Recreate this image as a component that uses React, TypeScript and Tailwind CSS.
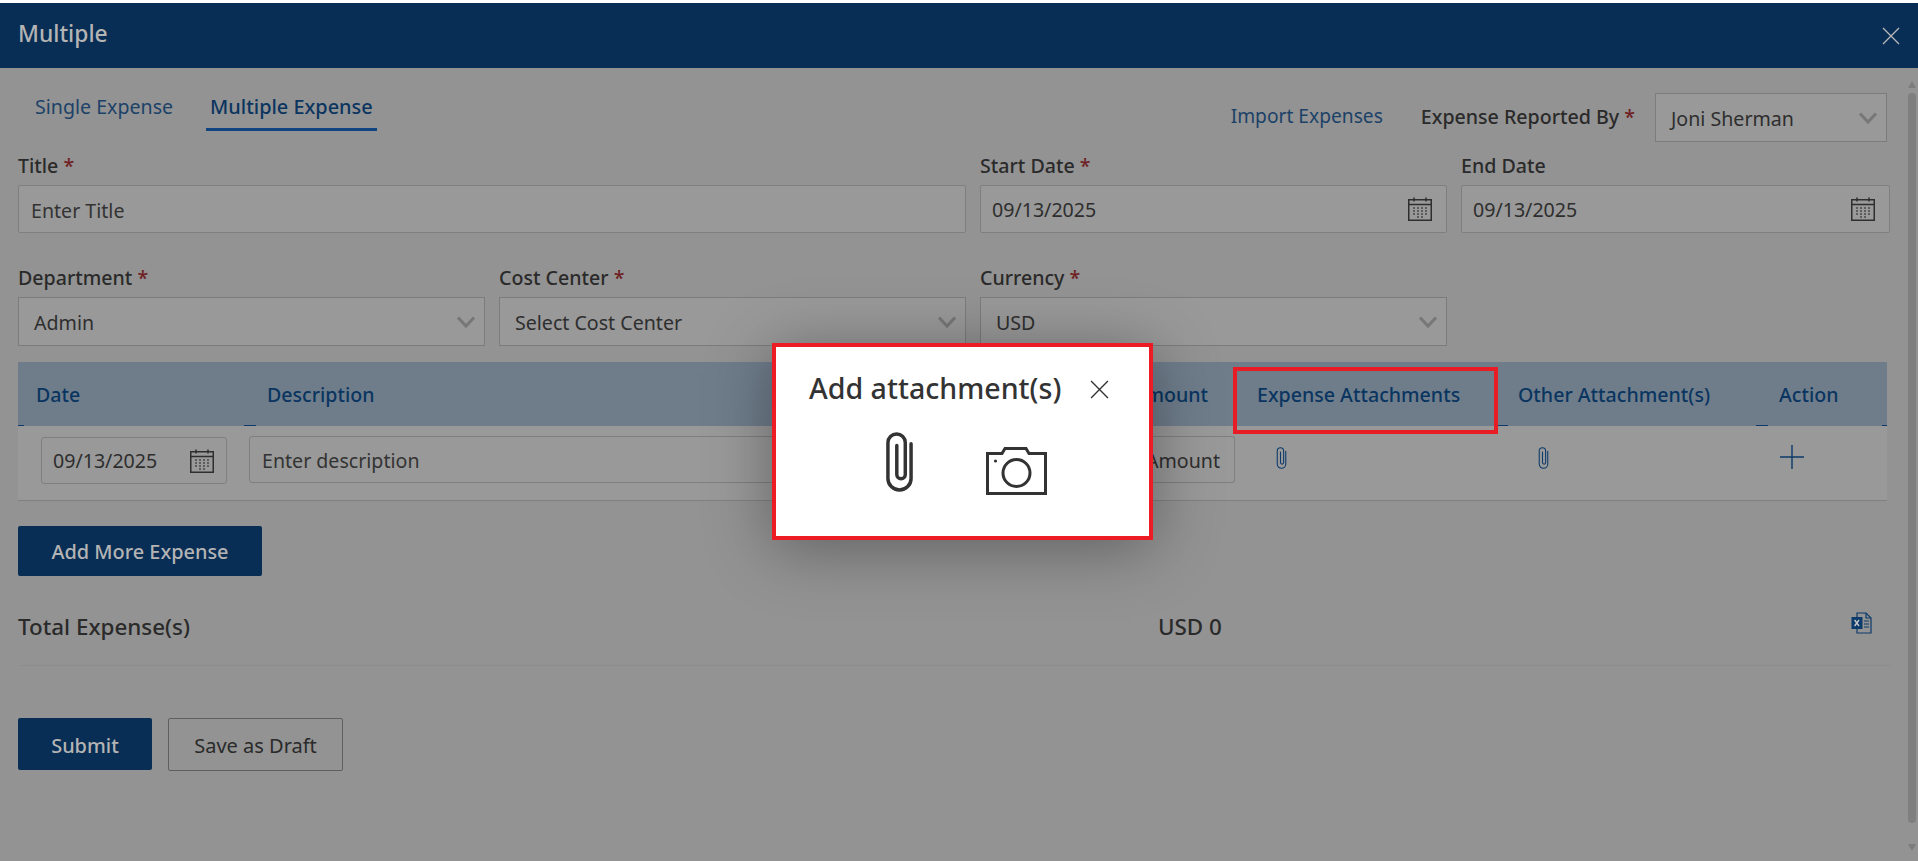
import React from 'react';

const Star = () => <span className="text-[#6f1f24]"> *</span>;

const Cross = ({ className = '' }: { className?: string }) => (
  <svg viewBox="0 0 18 18" className={className} fill="none" stroke="currentColor" strokeWidth="1.3">
    <path d="M1 1l16 16M17 1L1 17" />
  </svg>
);

const Calendar = ({ className = '' }: { className?: string }) => (
  <svg viewBox="0 0 24 24" className={className} fill="none" stroke="#2e2e2e">
    <rect x="0.75" y="2.75" width="22.5" height="20.5" strokeWidth="1.5" />
    <path d="M0.75 7.5h22.5" strokeWidth="1.5" />
    <path d="M6 0.5v4M18 0.5v4" strokeWidth="1.5" />
    <path
      d="M5 11h2M9 11h2M13 11h2M17 11h2M5 14h2M9 14h2M13 14h2M17 14h2M5 17h2M9 17h2M13 17h2M17 17h2M9 20h2M13 20h2"
      strokeWidth="1.5"
      stroke="#4a4a4a"
    />
  </svg>
);

const Chevron = () => (
  <svg viewBox="0 0 18 12" className="w-[18px] h-[12px]" fill="none" stroke="#777777" strokeWidth="3">
    <path d="M1 1.5l8 8.5 8-8.5" />
  </svg>
);

const Clip = ({ className = '', stroke = '#0b3a6b', width = 1.5 }: { className?: string; stroke?: string; width?: number }) => (
  <svg viewBox="0 0 14 31" className={className} fill="none" stroke={stroke} strokeWidth={width} strokeLinecap="round">
    <path d="M13 6v18a6 6 0 0 1-12 0V5.5a4.5 4.5 0 0 1 9 0V22a2.2 2.2 0 0 1-4.4 0V7" />
  </svg>
);

const Camera = () => (
  <svg viewBox="0 0 61 48" className="w-[61px] h-[48px]" fill="none" stroke="#333" strokeWidth="3">
    <path d="M1.5 6.5h14.5l3-5h21l3 5h16.5v40h-58z" strokeLinejoin="miter" />
    <circle cx="30.5" cy="26" r="13.5" />
    <circle cx="9.5" cy="14" r="1.6" fill="#333" stroke="none" />
  </svg>
);

const Excel = () => (
  <svg viewBox="0 0 22 22" className="w-[22px] h-[22px]" fill="none" stroke="#0b3a6b" strokeWidth="1.2">
    <path d="M6 5V1h9l5 5v15H6v-4" />
    <path d="M15 1v5h5" />
    <path d="M13 9h5M13 12h5M13 15h5" />
    <rect x="0.5" y="5" width="11" height="12" fill="#0b3a6b" stroke="none" />
    <path d="M3.6 8l4.4 6M8 8l-4.4 6" stroke="#c8c8c8" strokeWidth="1.4" />
  </svg>
);

const Field = ({ label, required, children, className = '' }: { label: string; required?: boolean; children: React.ReactNode; className?: string }) => (
  <div className={className}>
    <label className="block h-[26px] leading-[28px] mb-[7px] text-[19.6px] font-medium text-[#2a2a2a]">
      {label}
      {required && <Star />}
    </label>
    {children}
  </div>
);

const TextInput = ({ placeholder, value }: { placeholder?: string; value?: string }) => (
  <input
    readOnly
    placeholder={placeholder}
    value={value}
    className="w-full h-[48px] px-[12px] pt-[2px] bg-[#999999] border border-[#7f7f7f] rounded-[2px] text-[19.6px] text-[#2e2e2e] placeholder:text-[#333333] outline-none"
  />
);

const DateInput = ({ value }: { value: string }) => (
  <div className="h-[48px] pl-[11px] pr-[14px] bg-[#999999] border border-[#7f7f7f] rounded-[2px] flex items-center justify-between text-[19.6px] text-[#2e2e2e]">
    <span className="pt-[1px]">{value}</span>
    <Calendar className="w-[24px] h-[24px]" />
  </div>
);

const Select = ({ value, className = '' }: { value: string; className?: string }) => (
  <div className={`h-[49px] pl-[15px] pr-[9px] bg-[#999999] border border-[#7c7c7c] flex items-center justify-between text-[19.6px] text-[#2e2e2e] ${className}`}>
    <span className="pt-[3px]">{value}</span>
    <Chevron />
  </div>
);

const Dash = ({ className }: { className: string }) => <span className={`absolute bottom-0 h-px bg-[#0b3a6b] ${className}`} />;

export default function App() {
  return (
    <div className="relative h-[861px] overflow-hidden bg-[#939393] font-['Noto_Sans','Open_Sans',sans-serif]">
      <div className="h-[3px] bg-white" />
      <header className="h-[65px] bg-[#082e55] flex items-center justify-between pl-[18px] pr-[18px]">
        <h1 className="text-[22.8px] font-medium text-[#b4b4b4] -mt-[3px]">Multiple</h1>
        <Cross className="w-[18px] h-[18px] text-[#b9b9b9]" />
      </header>

      <main className="pl-[18px] pr-[27px]">
        <div className="h-[84px] flex justify-between">
          <div className="flex items-start pt-[24px] pl-[17px]">
            <span className="h-[36px] text-[19.6px] text-[#1c4268]">Single Expense</span>
            <span className="ml-[33px] -mr-[4px] px-[4px] h-[39px] border-b-[3px] border-[#0f4480] text-[19.9px] font-medium text-[#0b3560]">
              Multiple Expense
            </span>
          </div>
          <div className="flex items-start pt-[25px] pr-[4px]">
            <span className="mt-[9px] text-[19.2px] text-[#1c4268]">Import Expenses</span>
            <span className="mt-[9px] ml-[38px] text-[19.6px] font-medium text-[#2a2a2a]">
              Expense Reported By
              <Star />
            </span>
            <Select value="Joni Sherman" className="w-[232px] ml-[20px]" />
          </div>
        </div>

        <div className="grid grid-cols-[467px_467px_467px_429px] gap-x-[14px]">
          <Field label="Title" required className="col-span-2">
            <TextInput placeholder="Enter Title" />
          </Field>
          <Field label="Start Date" required>
            <DateInput value="09/13/2025" />
          </Field>
          <Field label="End Date">
            <DateInput value="09/13/2025" />
          </Field>

          <Field label="Department" required className="mt-[31px]">
            <Select value="Admin" />
          </Field>
          <Field label="Cost Center" required className="mt-[31px]">
            <Select value="Select Cost Center" />
          </Field>
          <Field label="Currency" required className="mt-[31px]">
            <Select value="USD" />
          </Field>
        </div>

        <div className="mt-[16px] mr-[4px]">
          <div className="relative h-[64px] pt-[1px] bg-[#6f7d8b] grid grid-cols-[231px_826px_170px_262px_255px_125px] items-center text-[19.6px] font-medium text-[#0a3560]">
            <span className="pl-[18px]">Date</span>
            <span className="pl-[18px]">Description</span>
            <span className="text-right pr-[37px]">Amount</span>
            <span className="pl-[12px]">Expense Attachments</span>
            <span className="pl-[11px]">Other Attachment(s)</span>
            <span className="pl-[17px]">Action</span>
            <Dash className="left-0 w-[6px]" />
            <Dash className="left-[226px] w-[12px]" />
            <Dash className="left-[1478px] w-[12px]" />
            <Dash className="left-[1738px] w-[12px]" />
            <Dash className="right-0 w-[5px]" />
          </div>
          <div className="h-[75px] bg-[#999999] border-b border-[#808080] grid grid-cols-[231px_826px_170px_262px_255px_125px] text-[19.6px] text-[#2e2e2e]">
            <div className="pl-[23px] pr-[22px] pt-[11px]">
              <div className="h-[47px] pl-[11px] pr-[12px] border border-[#7f7f7f] rounded-[3px] flex items-center justify-between">
                <span>09/13/2025</span>
                <Calendar className="w-[24px] h-[24px]" />
              </div>
            </div>
            <div className="pt-[10px]">
              <input
                readOnly
                placeholder="Enter description"
                className="w-full h-[47px] px-[12px] pt-[2px] bg-transparent border border-[#7f7f7f] rounded-l-[3px] placeholder:text-[#333333] outline-none"
              />
            </div>
            <div className="pt-[10px] pr-[10px]">
              <div className="h-[47px] pr-[14px] pt-[2px] border border-[#7f7f7f] border-l-0 rounded-r-[3px] flex items-center justify-end">Amount</div>
            </div>
            <div className="pl-[31px] pt-[21px]">
              <Clip className="w-[11px] h-[22px]" />
            </div>
            <div className="pl-[31px] pt-[21px]">
              <Clip className="w-[11px] h-[22px]" />
            </div>
            <div className="pl-[18px] pt-[19px]">
              <svg viewBox="0 0 24 24" className="w-[24px] h-[24px]" fill="none" stroke="#0b3a6b" strokeWidth="1.4">
                <path d="M12 0v24M0 12h24" />
              </svg>
            </div>
          </div>
        </div>

        <button className="block mt-[25px] w-[244px] h-[50px] pt-[2px] bg-[#082e55] rounded-[2px] text-[19.9px] font-medium text-[#b4b4b4]">
          Add More Expense
        </button>

        <div className="mt-[36px] h-[30px] flex items-center">
          <span className="w-[1140px] text-[22.4px] font-medium text-[#2a2a2a]">Total Expense(s)</span>
          <span className="text-[22.4px] font-medium text-[#2a2a2a]">USD 0</span>
          <span className="ml-auto mr-[18px] -mt-[8px]">
            <Excel />
          </span>
        </div>
        <div className="mt-[23px] h-px bg-[#8d8d8d]" />

        <div className="mt-[52px] flex gap-[16px]">
          <button className="w-[134px] h-[52px] pt-[3px] bg-[#082e55] rounded-[2px] text-[19.9px] font-medium text-[#b4b4b4]">Submit</button>
          <button className="w-[175px] h-[53px] pt-[2px] border border-[#5f5f5f] rounded-[2px] text-[20px] text-[#2a2a2a]">Save as Draft</button>
        </div>
      </main>

      {/* fake scrollbar */}
      <div className="absolute right-[2px] top-[81px] w-[8px] h-[770px] flex flex-col items-center">
        <span className="w-0 h-0 border-x-[4px] border-x-transparent border-b-[7px] border-b-[#7d7d7d]" />
        <span className="mt-[5px] w-[8px] h-[730px] rounded-full bg-[#7f7f7f]" />
        <span className="mt-auto w-0 h-0 border-x-[4px] border-x-transparent border-t-[7px] border-t-[#7d7d7d]" />
      </div>

      {/* red callout on the column header */}
      <div className="absolute left-[1233px] top-[367px] w-[265px] h-[67px] border-[4px] border-[#e81c24]" />

      <div className="absolute left-[772px] top-[343px] w-[381px] h-[197px] bg-white border-[4px] border-[#ed1c24] shadow-[0_8px_60px_rgba(0,0,0,0.35)]">
        <div className="flex items-center pl-[33px] pt-[21px]">
          <h2 className="text-[28.6px] leading-[40px] font-medium text-[#333333]">Add attachment(s)</h2>
          <Cross className="w-[19px] h-[19px] ml-[29px] mt-[3px] text-[#333333]" />
        </div>
        <div className="flex items-start pl-[110px] mt-[24px]">
          <Clip className="w-[27px] h-[60px]" stroke="#333333" width={1.8} />
          <span className="ml-[73px] mt-[15px]">
            <Camera />
          </span>
        </div>
      </div>
    </div>
  );
}
